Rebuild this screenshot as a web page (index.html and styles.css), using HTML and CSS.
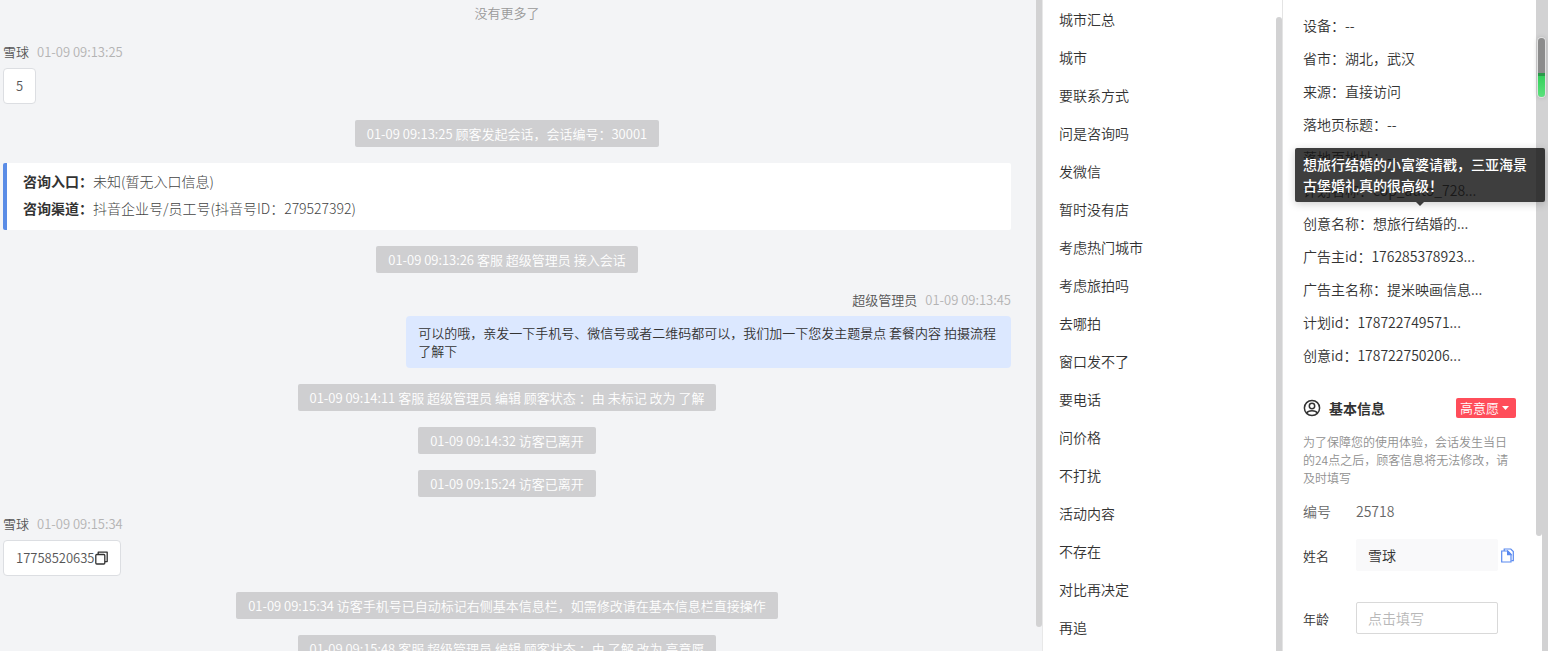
FILE: index.html
```html
<!DOCTYPE html>
<html lang="zh-CN">
<head>
<meta charset="utf-8">
<title>会话</title>
<link rel="stylesheet" href="styles.css">
</head>
<body>
<div class="app">
  <main class="chat">
    <div class="chat-log">
      <p class="no-more">没有更多了</p>

      <section class="message">
        <div class="meta"><span class="author">雪球</span><time>01-09 09:13:25</time></div>
        <div class="bubble">5</div>
      </section>

      <p class="notice">01-09 09:13:25 顾客发起会话，会话编号：30001</p>

      <dl class="source-card">
        <div><dt>咨询入口：</dt><dd>未知(暂无入口信息)</dd></div>
        <div><dt>咨询渠道：</dt><dd>抖音企业号/员工号(抖音号ID：279527392)</dd></div>
      </dl>

      <p class="notice">01-09 09:13:26 客服 超级管理员 接入会话</p>

      <section class="message message-own">
        <div class="meta"><span class="author">超级管理员</span><time>01-09 09:13:45</time></div>
        <div class="bubble">可以的哦，亲发一下手机号、微信号或者二维码都可以，我们加一下您发主题景点 套餐内容 拍摄流程 了解下</div>
      </section>

      <p class="notice">01-09 09:14:11 客服 超级管理员 编辑 顾客状态 ：由 未标记 改为 了解</p>
      <p class="notice">01-09 09:14:32 访客已离开</p>
      <p class="notice">01-09 09:15:24 访客已离开</p>

      <section class="message">
        <div class="meta"><span class="author">雪球</span><time>01-09 09:15:34</time></div>
        <div class="bubble">17758520635<button class="copy-phone" type="button" aria-label="复制手机号"><svg width="13" height="14" viewBox="0 0 13 14" fill="none" stroke="currentColor" stroke-width="1.3" stroke-linejoin="round"><rect x="0.8" y="3.5" width="9" height="9.5" rx="1"/><path d="M3.2 3.5V1.2H12.2V10.6H9.8"/></svg></button></div>
      </section>

      <p class="notice">01-09 09:15:34 访客手机号已自动标记右侧基本信息栏，如需修改请在基本信息栏直接操作</p>
      <p class="notice">01-09 09:15:48 客服 超级管理员 编辑 顾客状态 ：由 了解 改为 高意愿</p>
    </div>
    <div class="track track-chat"><div class="thumb"></div></div>
  </main>

  <nav class="phrases">
    <ul class="phrase-list">
      <li>城市汇总</li>
      <li>城市</li>
      <li>要联系方式</li>
      <li>问是咨询吗</li>
      <li>发微信</li>
      <li>暂时没有店</li>
      <li>考虑热门城市</li>
      <li>考虑旅拍吗</li>
      <li>去哪拍</li>
      <li>窗口发不了</li>
      <li>要电话</li>
      <li>问价格</li>
      <li>不打扰</li>
      <li>活动内容</li>
      <li>不存在</li>
      <li>对比再决定</li>
      <li>再追</li>
    </ul>
    <div class="track track-phrases"><div class="thumb"></div></div>
  </nav>

  <aside class="customer">
    <div class="customer-body">
      <ul class="details">
        <li>设备：--</li>
        <li>省市：湖北，武汉</li>
        <li>来源：直接访问</li>
        <li>落地页标题：--</li>
        <li>落地页地址：--</li>
        <li>计划名称：cop_auto_728...</li>
        <li class="has-tip">创意名称：想旅行结婚的...
          <div class="tip" role="tooltip">想旅行结婚的小富婆请戳，三亚海景古堡婚礼真的很高级！</div>
        </li>
        <li>广告主id：176285378923...</li>
        <li>广告主名称：提米映画信息...</li>
        <li>计划id：178722749571...</li>
        <li>创意id：178722750206...</li>
      </ul>

      <header class="section-head">
        <svg width="18" height="18" viewBox="0 0 18 18" fill="none" stroke="currentColor" stroke-width="1.5"><circle cx="9" cy="9" r="7.6"/><circle cx="9" cy="7" r="2.7"/><path d="M3.6 14.2C4.6 12.3 6.2 11.8 9 11.8S13.4 12.3 14.4 14.2"/></svg>
        <h2>基本信息</h2>
        <div class="level">
          <select aria-label="顾客状态"><option>高意愿</option></select>
          <svg class="caret" width="7" height="4" viewBox="0 0 7 4"><path d="M0 0H7L3.5 4Z" fill="currentColor"/></svg>
        </div>
      </header>
      <p class="hint">为了保障您的使用体验，会话发生当日的24点之后，顾客信息将无法修改，请及时填写</p>

      <div class="row row-id"><span>编号</span><span>25718</span></div>
      <div class="row">
        <label for="name">姓名</label>
        <input id="name" class="filled" type="text" value="雪球">
        <button class="copy-name" type="button" aria-label="复制姓名"><svg width="13" height="15" viewBox="0 0 13 15" fill="none" stroke="currentColor" stroke-width="1.2"><path d="M3.2 3V1H9.8L12.3 3.5V12.6H10.4"/><path d="M0.7 3H6.8L10 6.2V14H0.7Z"/><path d="M6.6 3.2V6.6H10Z" fill="currentColor"/></svg></button>
      </div>
      <div class="row row-age">
        <label for="age">年龄</label>
        <input id="age" type="text" placeholder="点击填写">
      </div>
    </div>
    <div class="track track-customer"><div class="thumb"></div></div>
  </aside>

  <div class="page-track"><div class="meter"></div></div>
</div>
</body>
</html>
```
FILE: styles.css
```css
* {
  box-sizing: border-box;
}

body,
p,
ul,
dl,
dd,
h2 {
  margin: 0;
  padding: 0;
}

body {
  font-family: "Noto Sans CJK SC", "Microsoft YaHei", sans-serif;
  font-size: 14px;
  font-weight: 350;
  color: #333;
  background: #fff;
}

ul {
  list-style: none;
}

button,
input,
select {
  font: inherit;
  color: inherit;
}

button {
  display: inline-flex;
  padding: 0;
  border: 0;
  background: none;
}

.app {
  display: flex;
  height: 100vh;
  overflow: hidden;
}

.track {
  flex: 0 0 6px;
}

.thumb {
  height: 100%;
  background: #d2d2d3;
}

/* Conversation */
.chat {
  flex: 1;
  min-width: 0;
  display: flex;
  background: #f3f4f6;
}

.chat-log {
  flex: 1;
  min-width: 0;
  display: flex;
  flex-direction: column;
  gap: 16px;
  padding: 0 25px 0 3px;
  font-size: 13px;
}

.chat-log > * {
  flex-shrink: 0;
}

.no-more {
  line-height: 25px;
  text-align: center;
  color: #999;
}

.message {
  display: flex;
  flex-direction: column;
  align-items: flex-start;
  gap: 5px;
}

.message-own {
  align-items: flex-end;
}

.meta {
  display: flex;
  gap: 8px;
  line-height: 22px;
}

.author {
  color: #555;
}

time {
  color: #b3b3b3;
}

.bubble {
  display: flex;
  align-items: center;
  max-width: 60%;
  padding: 8px 12px;
  border: 1px solid #dcdee2;
  border-radius: 4px;
  background: #fff;
  line-height: 18px;
  color: #555;
}

.message-own .bubble {
  border: 0;
  background: #dce8ff;
  color: #333;
}

.copy-phone {
  color: #333;
}

.notice {
  align-self: center;
  padding: 0 12px;
  border-radius: 2px;
  background: #cfcfd1;
  line-height: 27px;
  color: #fff;
}

.source-card {
  padding: 5px 16px 8px;
  border-left: 4px solid #5a8ce6;
  border-radius: 2px;
  background: #fff;
  font-size: 14px;
  line-height: 27px;
}

.source-card div {
  display: flex;
}

dt {
  font-weight: 700;
}

dd {
  font-weight: 300;
  color: #444;
}

.track-chat {
  padding-bottom: 24px;
}

.track-chat .thumb {
  border-radius: 0 0 3px 3px;
}

/* Phrase groups */
.phrases {
  flex: 0 0 240px;
  display: flex;
  border-left: 1px solid #e8e8e8;
}

.phrase-list {
  flex: 1;
  padding: 0 16px;
  line-height: 38px;
}

.track-phrases {
  padding-top: 17px;
}

.track-phrases .thumb {
  border-radius: 3px 3px 0 0;
}

/* Customer profile */
.customer {
  flex: 0 0 260px;
  display: flex;
  border-left: 1px solid #e4e4e4;
}

.customer-body {
  flex: 1;
  min-width: 0;
  padding: 9px 20px;
}

.details {
  line-height: 33px;
  white-space: nowrap;
}

.has-tip {
  position: relative;
}

.tip {
  position: absolute;
  bottom: calc(100% + 5px);
  left: -8px;
  z-index: 2;
  width: 250px;
  padding: 6px 8px;
  border-radius: 2px;
  background: rgba(20, 20, 20, 0.82);
  box-shadow: 0 2px 8px rgba(0, 0, 0, 0.2);
  font-weight: 500;
  line-height: 21px;
  white-space: normal;
  color: #fff;
}

.tip::after {
  content: "";
  position: absolute;
  top: 100%;
  left: 50%;
  margin-left: -4px;
  border: 4px solid transparent;
  border-top-color: #3b3b3b;
  border-bottom: 0;
}

.section-head {
  display: flex;
  align-items: center;
  gap: 8px;
  width: 213px;
  margin: 26px 0 15px;
  line-height: 20px;
}

h2 {
  flex: 1;
  font-size: 14px;
  font-weight: 700;
}

.level {
  position: relative;
  width: 60px;
  height: 20px;
  color: #fff;
}

.level select {
  display: block;
  width: 100%;
  height: 100%;
  padding: 0 4px;
  border: 0;
  border-radius: 2px;
  background: #ff4d5a;
  font-size: 13px;
  line-height: 20px;
  appearance: none;
}

.caret {
  position: absolute;
  top: 8px;
  right: 7px;
  pointer-events: none;
}

.hint {
  width: 213px;
  font-size: 12px;
  line-height: 18px;
  color: #909090;
}

.row {
  display: grid;
  grid-template-columns: 53px 142px auto;
  justify-content: start;
  align-items: center;
  height: 32px;
  margin-top: 12px;
}

.row-id {
  margin-top: 8px;
  color: #666;
}

.row-age {
  margin-top: 31px;
}

label {
  font-size: 13px;
}

input {
  width: 100%;
  height: 32px;
  padding: 0 11px;
  border: 1px solid #d9d9d9;
  border-radius: 2px;
  background: #fff;
}

input::placeholder {
  color: #b8b8b8;
}

.filled {
  border-color: #f9f9fa;
  background: #f9f9fa;
}

.copy-name {
  margin-left: 3px;
  color: #5a8af0;
}

.track-customer {
  padding-bottom: 115px;
}

.track-customer .thumb {
  border-radius: 0 0 3px 3px;
}

/* Page scrollbar with its level meter */
.page-track {
  position: relative;
  flex: 0 0 6px;
  background: #d2d2d3;
}

.meter {
  position: absolute;
  top: 38px;
  right: 3px;
  width: 7px;
  height: 59px;
  border-radius: 4px;
  background: linear-gradient(#8c8c8c 35px, #2b9a4a 35px, #2b9a4a 38px, #35cf5c 38px, #5be27c);
  box-shadow: 0 0 0 1px #e2e2e2, 0 0 5px rgba(0, 0, 0, 0.25);
}
```
